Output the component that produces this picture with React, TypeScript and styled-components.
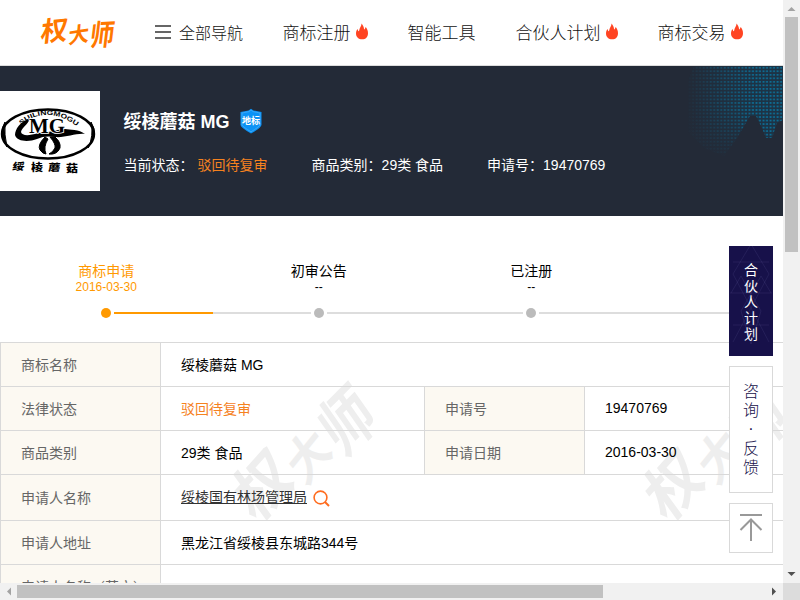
import React from "react";
import styled, { createGlobalStyle } from "styled-components";

const Global = createGlobalStyle`
  * { box-sizing: border-box; }
  body { margin: 0; overflow: hidden; background: #fff; color: #000;
    font-family: "Liberation Sans", "Noto Sans CJK SC", sans-serif; font-size: 14px; }
`;

const Window = styled.div`
  display: grid;
  grid-template: 583px 17px / 783px 17px;
  width: 800px;
  height: 600px;
`;
const Page = styled.div`
  position: relative;
  overflow: hidden;
  white-space: nowrap;
`;

const Header = styled.header`
  display: flex;
  align-items: center;
  height: 66px;
  border-bottom: 1px solid #ddd;
  padding-left: 36px;
`;
const NavLink = styled.a<{ $gap: number; $size?: number }>`
  display: flex;
  align-items: center;
  height: 24px;
  margin: 0 0 2px ${(p) => p.$gap}px;
  font: 300 ${(p) => p.$size ?? 17}px/24px "Noto Sans CJK SC", sans-serif;
  color: #111;
`;
const MenuBars = styled.span`
  width: 16px;
  height: 14px;
  margin-right: 8px;
  border: solid #666;
  border-width: 2px 0;
  display: flex;
  align-items: center;
  &::after { content: ""; width: 16px; height: 2px; background: #666; }
`;
const FlameIcon = styled.svg`
  width: 14px;
  height: 17px;
  margin-left: 4px;
`;

const Hero = styled.section`
  position: relative;
  display: flex;
  height: 150px;
  padding-top: 25px;
  background: #232a37;
  color: #fff;
`;
const MapDots = styled.svg`
  position: absolute;
  top: 0;
  right: 0;
`;
const Summary = styled.div`
  padding: 17px 0 0 23.6px;
`;
const Title = styled.h1`
  display: flex;
  align-items: center;
  gap: 9px;
  height: 26px;
  margin: 0;
  font-size: 18px;
`;
const TitleText = styled.span`
  margin-bottom: 3px;
`;
const Facts = styled.div`
  display: flex;
  gap: 44px;
  height: 20px;
  margin-top: 21px;
  line-height: 20px;
`;
const Status = styled.span`
  color: #f5821f;
`;
const HeroStatus = styled(Status)`
  margin-left: 4px;
`;

const Timeline = styled.section`
  display: flex;
  width: 850px;
  height: 126px;
  padding-top: 46px;
`;
const Step = styled.div<{ $active?: boolean }>`
  display: flex;
  flex-direction: column;
  align-items: center;
  width: 212.5px;
  color: ${(p) => (p.$active ? "#f90" : "#000")};
`;
const StepName = styled.div`
  height: 18px;
  line-height: 18px;
`;
const StepDate = styled.div`
  height: 14px;
  font-size: 12px;
  line-height: 14px;
`;
const Track = styled.div`
  display: flex;
  align-items: center;
  gap: 3px;
  width: 100%;
  height: 10px;
  margin-top: 14px;
`;
const Rail = styled.i<{ $tone: string }>`
  flex: 1;
  height: 2px;
  background: ${(p) => p.$tone};
`;
const Dot = styled.i<{ $active?: boolean }>`
  width: 10px;
  height: 10px;
  border-radius: 50%;
  background: ${(p) => (p.$active ? "#f90" : "#bbb")};
`;

const Details = styled.section`
  position: relative;
  isolation: isolate;
  width: 850px;
  border-left: 1px solid #d9d9d9;
`;
const Row = styled.div<{ $tall?: boolean }>`
  display: flex;
  height: ${(p) => (p.$tall ? 46 : 44)}px;
  border-top: 1px solid #d9d9d9;
`;
const Label = styled.div`
  display: flex;
  align-items: center;
  width: 160px;
  padding: 0 0 2px 20px;
  border-right: 1px solid #d9d9d9;
  background: #fcf9f2;
  color: #666;
`;
const Value = styled.div<{ $half?: boolean }>`
  display: flex;
  align-items: center;
  width: ${(p) => (p.$half ? "264px" : "auto")};
  padding: 0 0 2px 20px;
  border-right: ${(p) => (p.$half ? "1px solid #d9d9d9" : "0")};
`;
const Applicant = styled.a`
  margin-bottom: 1px;
  color: #333;
  text-decoration: underline;
`;
const SearchIcon = styled.svg`
  width: 17px;
  height: 17px;
  margin: 3px 0 0 6px;
`;
const Watermark = styled.svg<{ $left: number }>`
  position: absolute;
  z-index: -1;
  top: 0;
  left: ${(p) => p.$left}px;
`;

const SideDock = styled.aside`
  position: absolute;
  top: 246px;
  right: 10px;
  display: flex;
  flex-direction: column;
  gap: 10px;
  width: 44px;
`;
const Partner = styled.a`
  position: relative;
  display: flex;
  flex-direction: column;
  align-items: center;
  height: 110px;
  padding-top: 15px;
  background: #17114a;
  color: #fff;
  font: 400 14px/16px "Noto Sans CJK SC", sans-serif;
`;
const PartnerLines = styled.svg`
  position: absolute;
  inset: 0;
`;
const Feedback = styled.a`
  display: flex;
  flex-direction: column;
  align-items: center;
  height: 127px;
  padding-top: 14px;
  border: 1px solid #d9d9d9;
  background: #fff;
  color: #17114a;
  font: 300 16px/19px "Noto Sans CJK SC", sans-serif;
`;
const FeedbackDot = styled.span`
  font-family: "Liberation Sans", sans-serif;
`;
const BackTop = styled.a`
  display: flex;
  justify-content: center;
  height: 50px;
  padding-top: 9px;
  border: 1px solid #d9d9d9;
  background: #fff;
`;

const VBar = styled.div`
  display: flex;
  flex-direction: column;
  align-items: center;
  background: #f1f1f1;
`;
const HBar = styled.div`
  display: flex;
  align-items: center;
  background: #f1f1f1;
`;
const VThumb = styled.div`
  width: 13px;
  height: 235px;
  margin-bottom: auto;
  background: #c1c1c1;
`;
const HThumb = styled.div`
  width: 586px;
  height: 13px;
  margin-right: auto;
  background: #c1c1c1;
`;
const Corner = styled.div`
  background: #dcdcdc;
`;

const Arrow = ({ turn, color }: { turn: number; color: string }) => (
  <svg width="17" height="17" viewBox="0 0 17 17">
    <path d="M4.5 11L8.5 7L12.5 11Z" fill={color} transform={`rotate(${turn} 8.5 8.5)`} />
  </svg>
);

const Brand = ({ color }: { color: string }) => (
  <g fill={color} fontFamily="Noto Sans CJK SC, sans-serif" fontWeight="700">
    <text transform="translate(4 39) rotate(-6) skewX(-12)" fontSize="27">权</text>
    <text transform="translate(32 41) rotate(-9) skewX(-12)" fontSize="21">大</text>
    <text transform="translate(53 43) rotate(-3) skewX(-10) scale(.9 1.08)" fontSize="27">师</text>
  </g>
);

const Flame = () => (
  <FlameIcon viewBox="0 0 14 17">
    <path
      d="M6.6.5C7.8 2.2 8.8 3.6 9 5.7C9.1 6.5 9.5 6.7 9.8 6.1L10.7 4.1C12 5.7 13 7.8 13 10.2C13 14 10.7 16.3 7.2 16.3C3.6 16.3 1 14 1 10.5C1 8.5 1.8 7.2 2.6 6.1L3.2 7.9C3.6 8.5 4.2 7.8 4.3 7.1C4.5 4.6 6.4 3.5 6.6.5Z"
      fill="#ff4422"
    />
  </FlameIcon>
);

const TrademarkArt = () => (
  <svg width="100" height="100" viewBox="0 0 100 100">
    <path fill="#fff" d="M0 0H100V100H0Z" />
    <ellipse cx="48" cy="43" rx="46" ry="24.5" fill="none" stroke="#000" strokeWidth="2.4" />
    <path d="M5 31Q-2 42 7 56Q4 44 5 31ZM91 31Q99 43 88 57Q94 45 91 31Z" stroke="#000" />
    <path id="arch" d="M21 34Q47 13 78 36" fill="none" />
    <text fontFamily="Liberation Sans" fontWeight="700" fontSize="6.5">
      <textPath href="#arch" textLength="61" lengthAdjust="spacingAndGlyphs">SUILINGMOGU</textPath>
    </text>
    <path d="M30 27C20 31 15 38 15 44C17 51 29 51 37 48C43 45 49 45 55 46C65 47 76 42 85 43C79 38 70 39 65 38C55 39 47 42 38 42C29 45 22 45 21 41C22 36 28 34 30 27Z" />
    <path d="M45 46Q37 54 40 59Q43 63 46 63Q43 56 48 48ZM50 46Q56 53 55 57Q53 61 49 63Q57 64 60 57Q61 51 55 46Z" stroke="#000" />
    <text x="29" y="42" fontFamily="Liberation Serif" fontWeight="700" fontSize="20" textLength="36" lengthAdjust="spacingAndGlyphs" stroke="#fff" strokeWidth="1.6" paintOrder="stroke">MG</text>
    <g fontFamily="Noto Sans CJK SC, sans-serif" fontWeight="900" fontSize="12">
      <text transform="translate(12 79) skewX(-8) scale(1 .83)">绥</text>
      <text transform="translate(31 80) scale(1 .83)">棱</text>
      <text transform="translate(48 80) skewX(-5) scale(1 .83)">蘑</text>
      <text transform="translate(66 81) scale(1 .83)">菇</text>
    </g>
  </svg>
);

const Badge = () => (
  <svg width="24" height="26" viewBox="0 0 24 26">
    <path d="M12 .7L14.5 2.4L22.5 4V17Q22 20 12 25.4Q2 20 1.5 17V4L9.5 2.4Z" fill="#0b92f5" />
    <path d="M12 2L14 3.6L21 5V17Q20 19 12 23.8Q4 19 3 17V5L10 3.6Z" fill="none" stroke="#67baf8" strokeWidth=".5" />
    <text x="12" y="15.6" textAnchor="middle" fill="#fff" fontSize="9" fontWeight="600" fontFamily="Noto Sans CJK SC, sans-serif">地标</text>
  </svg>
);

const navItems = [
  { name: "商标注册", hot: true, gap: 39.6 },
  { name: "智能工具", hot: false, gap: 39 },
  { name: "合伙人计划", hot: true, gap: 40 },
  { name: "商标交易", hot: true, gap: 39 },
];
const steps = [
  { name: "商标申请", date: "2016-03-30", before: "transparent", after: "#f90" },
  { name: "初审公告", date: "--", before: "#ddd", after: "#ddd" },
  { name: "已注册", date: "--", before: "#ddd", after: "#ddd" },
  { name: "", date: "", before: "#ddd", after: "transparent" },
];

export default function App() {
  return (
    <Window>
      <Global />
      <Page>
        <Header>
          <svg width="84" height="60" viewBox="0 0 84 60"><Brand color="#ff7800" /></svg>
          <NavLink $gap={35} $size={16}><MenuBars />全部导航</NavLink>
          {navItems.map((n) => (
            <NavLink key={n.name} $gap={n.gap}>{n.name}{n.hot && <Flame />}</NavLink>
          ))}
        </Header>

        <Hero>
          <MapDots width="96" height="100" viewBox="687 66 96 100">
            <defs>
              <pattern id="dots" x="688" y="66" width="3.52" height="3.52" patternUnits="userSpaceOnUse">
                <path d="M.6 1H2.5V2.5H.6Z" fill="#087ca9" />
              </pattern>
              <linearGradient id="fade" x1="0" x2="1">
                <stop offset="0" stopColor="#fff" stopOpacity=".04" />
                <stop offset=".35" stopColor="#fff" stopOpacity=".5" />
                <stop offset=".7" stopColor="#fff" stopOpacity=".95" />
              </linearGradient>
              <linearGradient id="sink" x1="0" x2="0" y1="0" y2="1">
                <stop offset=".45" stopColor="#232a37" stopOpacity="0" />
                <stop offset=".95" stopColor="#232a37" stopOpacity=".9" />
              </linearGradient>
              <mask id="land">
                <path d="M694 66H783V120L777 123L772 138H766L762 128L756 116H750L737 138L724 156L704 148L688 132V80Z" fill="url(#fade)" />
              </mask>
            </defs>
            <g mask="url(#land)">
              <path d="M687 66H783V166H687Z" fill="#075c84" opacity=".2" />
              <path d="M687 66H783V166H687Z" fill="url(#dots)" />
            </g>
            <path d="M687 66H740V162H687Z" fill="url(#sink)" />
          </MapDots>
          <TrademarkArt />
          <Summary>
            <Title><TitleText>绥棱蘑菇 MG</TitleText><Badge /></Title>
            <Facts>
              <span>当前状态：<HeroStatus>驳回待复审</HeroStatus></span>
              <span>商品类别：29类 食品</span>
              <span>申请号：19470769</span>
            </Facts>
          </Summary>
        </Hero>

        <Timeline>
          {steps.map((s, i) => (
            <Step key={i} $active={i === 0}>
              <StepName>{s.name}</StepName>
              <StepDate>{s.date}</StepDate>
              <Track>
                <Rail $tone={s.before} /><Dot $active={i === 0} /><Rail $tone={s.after} />
              </Track>
            </Step>
          ))}
        </Timeline>

        <Details>
          {[216, 627].map((left) => (
            <Watermark key={left} $left={left} width="200" height="200" viewBox="0 0 200 200">
              <g transform="translate(-25 125) rotate(-42) scale(2.2)"><Brand color="#eee" /></g>
            </Watermark>
          ))}
          <Row><Label>商标名称</Label><Value>绥棱蘑菇 MG</Value></Row>
          <Row>
            <Label>法律状态</Label><Value $half><Status>驳回待复审</Status></Value>
            <Label>申请号</Label><Value>19470769</Value>
          </Row>
          <Row>
            <Label>商品类别</Label><Value $half>29类 食品</Value>
            <Label>申请日期</Label><Value>2016-03-30</Value>
          </Row>
          <Row $tall>
            <Label>申请人名称</Label>
            <Value>
              <Applicant>绥棱国有林场管理局</Applicant>
              <SearchIcon viewBox="0 0 17 17" fill="none" stroke="#ff6c1f" strokeWidth="1.6">
                <circle cx="7.5" cy="7.5" r="6.4" /><path d="M12 12L16 16" strokeWidth="2" />
              </SearchIcon>
            </Value>
          </Row>
          <Row><Label>申请人地址</Label><Value>黑龙江省绥棱县东城路344号</Value></Row>
          <Row><Label>申请人名称（英文）</Label><Value /></Row>
        </Details>

        <SideDock>
          <Partner>
            <PartnerLines width="44" height="110" fill="none" stroke="#6864a0" strokeOpacity=".25" strokeWidth=".7">
              <path d="M4 16H40M1 47H43M4 79H40M4 28L22 -2L40 28L4 96M4 28L40 96M2 47L12 30L32 65L22 98M42 47L32 30L12 65L22 98" />
            </PartnerLines>
            {[..."合伙人计划"].map((c) => <span key={c}>{c}</span>)}
          </Partner>
          <Feedback>
            <span>咨</span><span>询</span><FeedbackDot>·</FeedbackDot><span>反</span><span>馈</span>
          </Feedback>
          <BackTop>
            <svg width="24" height="28" fill="none" stroke="#999" strokeWidth="2">
              <path d="M1 2H23M12 28V6M1.5 17L12 6.5L22.5 17" />
            </svg>
          </BackTop>
        </SideDock>
      </Page>
      <VBar><Arrow turn={0} color="#a3a3a3" /><VThumb /><Arrow turn={180} color="#505050" /></VBar>
      <HBar><Arrow turn={-90} color="#a3a3a3" /><HThumb /><Arrow turn={90} color="#505050" /></HBar>
      <Corner />
    </Window>
  );
}
